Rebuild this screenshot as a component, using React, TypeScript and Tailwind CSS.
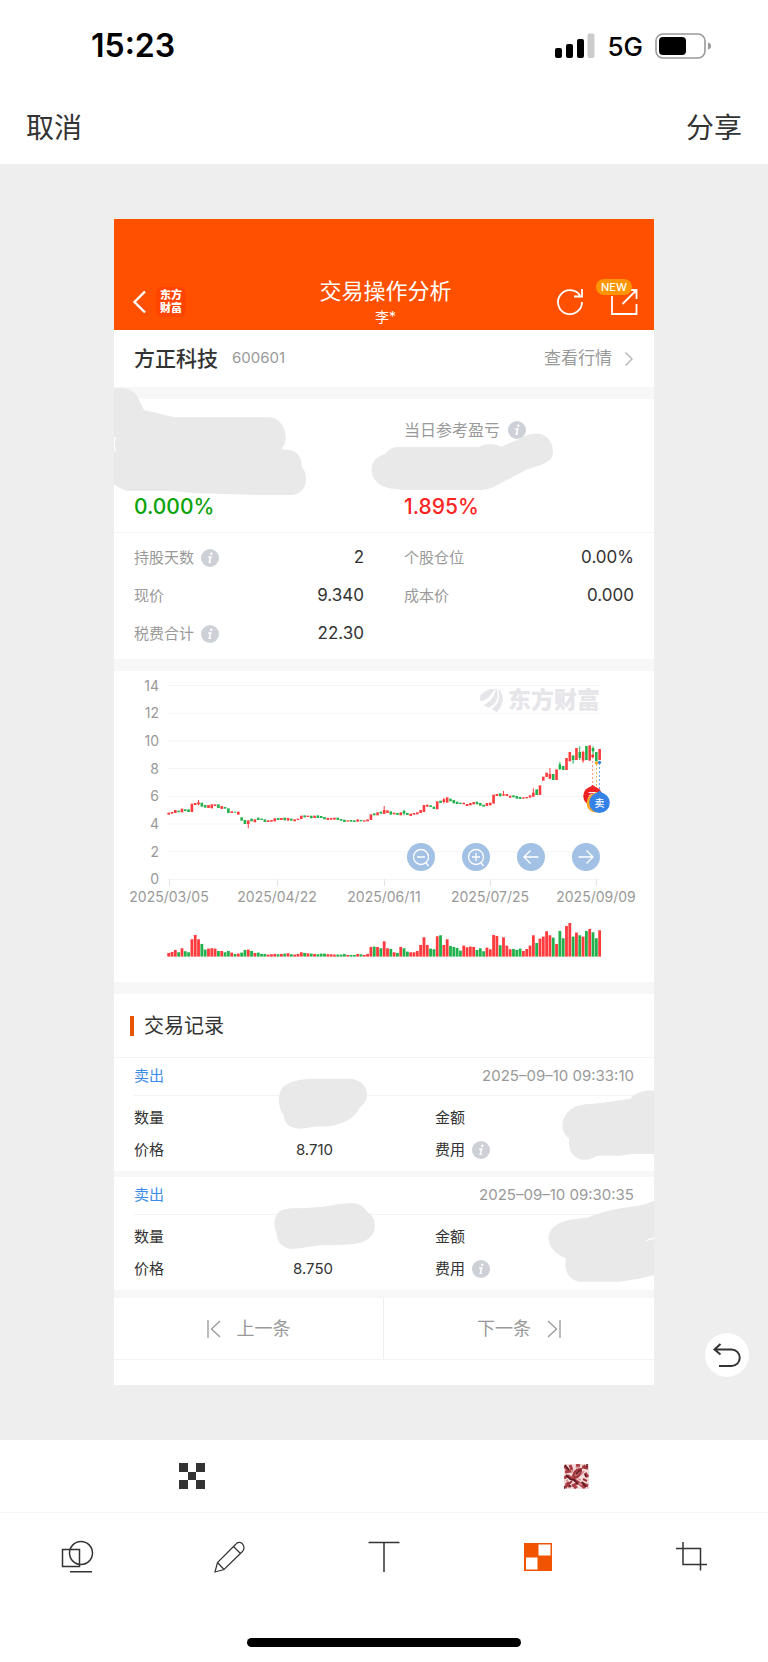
import React from "react";

type Candle = [up: number, top: number, bottom: number, volume: number, wickTop?: number, wickBottom?: number];

const candles: Candle[] = [
  [1, 458, 464, 11], [1, 456, 461, 14], [1, 450, 459, 20], [0, 452, 457, 13], [1, 446, 457, 25], [0, 448, 453, 16],
  [0, 448, 456, 13], [1, 431, 456, 52], [1, 429, 435, 65], [1, 427, 433, 52, 420, 436], [0, 428, 440, 38], [0, 435, 443, 21],
  [1, 435, 444, 24], [1, 433, 445, 25], [1, 433, 438, 24], [0, 433, 444, 17], [1, 438, 447, 17], [0, 441, 446, 13],
  [0, 445, 459, 17], [1, 454, 459, 12], [0, 455, 458, 8], [1, 455, 464, 9], [0, 472, 482, 12], [0, 480, 492, 20],
  [1, 482, 492, 21, 480, 505], [0, 476, 484, 17], [1, 478, 487, 11], [0, 473, 480, 12], [0, 476, 480, 8], [0, 478, 486, 8],
  [1, 481, 486, 6], [1, 480, 485, 7], [1, 475, 484, 8], [0, 474, 480, 7], [1, 474, 480, 8], [0, 473, 481, 9],
  [1, 474, 482, 10], [0, 476, 482, 7], [1, 478, 484, 6], [1, 476, 480, 8], [1, 467, 477, 13], [0, 466, 472, 11],
  [1, 467, 471, 10], [0, 467, 475, 9], [1, 467, 474, 8], [0, 466, 474, 7], [0, 468, 474, 9], [0, 471, 478, 9],
  [1, 474, 480, 7], [1, 474, 479, 7], [1, 473, 479, 6], [0, 473, 480, 6], [0, 477, 482, 6], [0, 479, 486, 8],
  [1, 481, 485, 5], [0, 480, 485, 5], [0, 481, 486, 5], [1, 478, 485, 8], [0, 480, 484, 7], [1, 481, 485, 5],
  [1, 478, 484, 8], [1, 463, 480, 29], [0, 460, 466, 30], [1, 457, 466, 29], [0, 455, 461, 25], [1, 450, 462, 46, 438, 462],
  [1, 451, 459, 25], [0, 454, 464, 23], [1, 458, 463, 13], [0, 459, 465, 11], [1, 457, 466, 29], [0, 453, 461, 25, 449, 466],
  [0, 459, 465, 15], [1, 461, 468, 13], [1, 459, 464, 13], [1, 457, 463, 17], [1, 450, 459, 35], [1, 435, 456, 58],
  [1, 434, 440, 35], [0, 436, 441, 24], [0, 440, 447, 22], [1, 424, 448, 61], [0, 422, 429, 64], [1, 418, 426, 35, 414, 430],
  [1, 412, 428, 52], [0, 416, 424, 32], [0, 420, 430, 29], [0, 425, 432, 26], [0, 428, 432, 18], [1, 428, 433, 33],
  [1, 432, 438, 28], [1, 429, 436, 30], [1, 426, 433, 29], [0, 425, 433, 20], [0, 429, 437, 25], [0, 434, 440, 16],
  [1, 429, 438, 27], [1, 428, 436, 22], [1, 404, 431, 65], [1, 402, 408, 62], [0, 400, 409, 34], [1, 403, 407, 58, 393, 407],
  [1, 402, 408, 33], [1, 407, 413, 22], [0, 406, 412, 23], [0, 408, 416, 20], [0, 411, 417, 24], [1, 412, 416, 17],
  [1, 411, 415, 23], [1, 406, 413, 33], [1, 398, 410, 64, 385, 410], [0, 388, 405, 41], [1, 376, 405, 54], [1, 350, 362, 60],
  [1, 338, 351, 76], [1, 342, 356, 64, 324, 358], [0, 342, 360, 57], [1, 328, 360, 38], [0, 313, 327, 77, 306, 330], [0, 318, 330, 55],
  [1, 294, 330, 92], [1, 276, 304, 101], [0, 287, 300, 60, 285, 311], [1, 264, 300, 72], [0, 276, 294, 64, 259, 300], [1, 276, 302, 60, 272, 308],
  [0, 258, 300, 77], [1, 256, 302, 83], [0, 264, 274, 73, 259, 288], [0, 276, 304, 55], [1, 267, 300, 79],
];

const RED = "#ff3b3e";
const GREEN = "#22b14c";
const step = 3.315;
const plotLeft = 54.7;

function Info() {
  return (
    <svg viewBox="0 0 18 18" className="size-[18px] shrink-0" aria-hidden="true">
      <circle cx="9" cy="9" r="9" fill="#cdd0d7" />
      <circle cx="10.3" cy="4.8" r="1.2" fill="#fff" />
      <path d="M7.2 8h2.5l-1.4 5.3h1.6" fill="none" stroke="#fff" strokeWidth="1.5" />
    </svg>
  );
}

function Smudge({ y, children }: { y: number; children: React.ReactNode }) {
  return (
    <svg width="540" height="113" className="pointer-events-none absolute top-0 left-0 overflow-visible" fill="#e9e9e9" aria-hidden="true">
      <g transform={`translate(-4 ${y}) scale(.3508 .3333)`}>{children}</g>
    </svg>
  );
}

function Pin({ x, y, r, fill, label }: { x: number; y: number; r: number; fill: string; label?: string }) {
  return (
    <g>
      <path d={`M${x - r * 0.6} ${y - r * 0.7} L${x} ${y - r - 1.6} L${x + r * 0.6} ${y - r * 0.7}Z`} fill={fill} />
      <circle cx={x} cy={y} r={r} fill={fill} />
      {label ? <text x={x} y={y + 4} textAnchor="middle" fontSize="10" fontWeight="500" fill="#fff">{label}</text> : null}
    </g>
  );
}

function PriceChart() {
  const rows = [14, 12, 10, 8, 6, 4, 2, 0];
  const dates = ["2025/03/05", "2025/04/22", "2025/06/11", "2025/07/25", "2025/09/09"];
  const tickX = [55, 163, 270, 376, 482];
  return (
    <svg viewBox="0 0 540 311" className="block w-full" role="img" aria-label="股价走势">
      {rows.map((n, i) => (
        <g key={n}>
          <line x1="54" x2="486" y1={14.5 + i * 27.7} y2={14.5 + i * 27.7} stroke="#f4f4f5" />
          <text x="45" y={19.5 + i * 27.7} textAnchor="end" fontSize="14" fill="#999">{n}</text>
        </g>
      ))}
      {dates.map((d, i) => (
        <g key={d}>
          <line x1={tickX[i] + 0.5} x2={tickX[i] + 0.5} y1="208" y2="215" stroke="#e4e4e6" />
          <text x={tickX[i]} y="231" textAnchor="middle" fontSize="14" fill="#999">{d}</text>
        </g>
      ))}
      <g fill="#e5e5ea">
        <path d="M366.300 24.500C371 19.500 376 17.800 381 17.500C378 23 375 28 366.800 30.500C366 29 366 27 366.300 24.500Z" />
        <path d="M370 34C377 30 381 25 382 16.500C385.500 25 384 32 375 36.500C373 36.500 371 35.500 370 34Z" />
        <path d="M378 37.500C385 33 386.500 26 384 17.500C390 22 391 33 383 41C381.500 40.500 379 39.500 378 37.500Z" />
        <text x="394" y="37" fontSize="23" fontWeight="900">东方财富</text>
      </g>
      {candles.map(([up, top, bottom, volume, wt, wb], i) => {
        const x = plotLeft + i * step;
        const fill = up ? RED : GREEN;
        return (
          <g key={i} fill={fill}>
            <rect x={x - 1.3} y={top / 3 - 11} width="2.6" height={(bottom - top) / 3} />
            {wt && wb ? <rect x={x - 0.5} y={wt / 3 - 11} width="1" height={(wb - wt) / 3} /> : null}
            <rect x={x - 1.4} y={285.6 - volume / 3} width="2.8" height={volume / 3} />
          </g>
        );
      })}
      <g strokeDasharray="2 2" strokeWidth="1">
        <line x1="478.7" x2="478.7" y1="86" y2="115" stroke="#f8898b" />
        <line x1="482.5" x2="482.5" y1="93" y2="121" stroke="#f8b84f" />
        <line x1="485.5" x2="485.5" y1="92" y2="121" stroke="#78a8ec" />
      </g>
      <circle cx="478.7" cy="85" r="1.5" fill="#f02a2a" />
      <circle cx="482.5" cy="92" r="1.7" fill="#f9a826" />
      <circle cx="485.5" cy="91.5" r="1.7" fill="#3582e6" />
      <Pin x={478.7} y={125} r={9.5} fill="#f02222" label="买" />
      <Pin x={482} y={132} r={9.5} fill="#f9a826" />
      <Pin x={485.5} y={131.7} r={10.3} fill="#3582e6" label="卖" />
    </svg>
  );
}

function ChartButton({ label, children }: { label: string; children: React.ReactNode }) {
  return (
    <button type="button" aria-label={label} className="flex size-7 items-center justify-center rounded-full bg-[#a3c1e5]">
      <svg viewBox="0 0 28 28" className="size-7" fill="none" stroke="#fff" strokeWidth="1.3">{children}</svg>
    </button>
  );
}

function Stat({ label, value, info }: { label: string; value: string; info?: boolean }) {
  return (
    <div className="flex h-[38px] items-center justify-between">
      <dt className="flex items-center gap-[7px] text-[15px] text-[#999]">{label}{info && <Info />}</dt>
      <dd className="text-[17px] text-[#333]">{value}</dd>
    </div>
  );
}

function Trade({ time, price, children }: { time: string; price: string; children: React.ReactNode }) {
  return (
    <article className="relative text-[15px] text-[#333]">
      <div className="mx-5 flex h-[38px] items-center justify-between border-b border-[#f3f3f3]">
        <span className="text-[#3b8bea]">卖出</span>
        <time className="text-[#999]">{time}</time>
      </div>
      <dl className="grid grid-cols-2 gap-x-[102px] px-5 pt-1.5 pb-[5px] leading-8">
        <div className="flex justify-between"><dt>数量</dt><dd /></div>
        <div className="flex"><dt>金额</dt><dd /></div>
        <div className="flex justify-between"><dt>价格</dt><dd>{price}</dd></div>
        <div className="flex"><dt className="flex items-center gap-[7px]">费用<Info /></dt><dd /></div>
      </dl>
      {children}
    </article>
  );
}

function Mosaic() {
  return (
    <svg viewBox="0 0 25 25" className="size-[25px]" fill="none" aria-hidden="true">
      <rect width="25" height="25" fill="#f4dcdd" />
      <path d="M0 2l4 4M1 8l6-1M6 1l2 5M12 1l4 1M18 3l6 1M0 14l4-2 5 3 6 4 6 5M21 9l3 4M17 19l7 3M2 19l4 4M1 24l4-6M8 22l6-3M10 24l3-2" stroke="#a93d43" strokeWidth="3" />
      <path d="M9 12c1-5 4-7 8-7 1 4-2 8-6 9zM20 1l3 4M19 15l4 2M8 17l-3 3" stroke="#a0333a" strokeWidth="2" fill="#c0666a" />
      <path d="M1 1l4 5M12 10l4-4M2 11l4 4 4 1 4 4M18 18l4 5M23 0v3M5 21l2 2M0 22v3M21 10l1 3" stroke="#5d1820" strokeWidth="1.6" />
      <path d="M7 9l2-3M17 11l3-4M12 4l3-1M18 21l-3-2M4 16l-2 1M14 15l3 1" stroke="#d98f93" strokeWidth="1.8" />
    </svg>
  );
}

function Tool({ label, active, children }: { label: string; active?: boolean; children: React.ReactNode }) {
  return (
    <button type="button" aria-label={label} aria-pressed={!!active} className="flex items-center justify-center">
      <svg viewBox="0 0 34 34" className="size-[34px]" fill="none" stroke="#333" strokeWidth="1.5">{children}</svg>
    </button>
  );
}

export default function App() {
  return (
    <div className="flex min-h-screen flex-col bg-white font-['Inter','Noto_Sans_CJK_SC',sans-serif] text-[#333]">
      <div className="flex h-[92px] items-center justify-between pr-14 pl-[91px] text-black">
        <span className="text-[32px] font-semibold">15:23</span>
        <div className="flex items-center gap-3">
          <svg viewBox="0 0 40 26" className="h-[26px] w-10" aria-hidden="true">
            <rect x="0" y="15" width="7" height="10" rx="2" />
            <rect x="11" y="11" width="7" height="14" rx="2" />
            <rect x="22" y="6" width="7" height="19" rx="2" />
            <rect x="32.500" y="0.500" width="7" height="24.500" rx="2" fill="#ccc" />
          </svg>
          <span className="text-[26px] font-medium">5G</span>
          <svg viewBox="0 0 57 26" className="h-[26px] w-[57px]" aria-hidden="true">
            <rect x="1" y="1" width="49" height="24" rx="7" fill="none" stroke="#999" strokeWidth="1.6" />
            <rect x="4" y="4" width="27" height="18" rx="4" />
            <path d="M53 9.500q3 1 3 3.500t-3 3.500z" fill="#999" />
          </svg>
        </div>
      </div>
      <nav className="flex h-[72px] items-center justify-between px-[26px] text-[28px]">
        <button type="button">取消</button>
        <button type="button">分享</button>
      </nav>

      <main className="relative bg-[#eee] px-[114px] pt-[55px] pb-[55px]">
        <div className="relative overflow-hidden bg-[#f7f7f7]">
          <header className="grid h-[111px] grid-cols-[1fr_auto_1fr] items-end bg-[#ff5000] pr-[15px] pl-[18px] text-white">
            <div className="flex items-center gap-2.5 pb-[13px]">
              <button type="button" aria-label="返回">
                <svg viewBox="0 0 14 24" className="h-6 w-3.5" fill="none" stroke="#fff" strokeWidth="2.4"><path d="M13 1.500 2.500 12 13 22.500" /></svg>
              </button>
              <span className="flex size-[30px] items-center justify-center rounded-md bg-[#ff4400] text-center text-[11px] leading-[13px] font-black">东方<br />财富</span>
            </div>
            <div className="flex flex-col items-center pb-[3px]">
              <h1 className="text-[22px] leading-8">交易操作分析</h1>
              <p className="text-sm leading-5">李*</p>
            </div>
            <div className="flex items-center justify-end gap-6 pb-[13px]">
              <button type="button" aria-label="刷新">
                <svg viewBox="0 0 30 30" className="size-[30px]" fill="none" stroke="#fff" strokeWidth="1.8"><path d="M25 8.500A12 12 0 1 0 27 15M27 2v7.500h-8" /></svg>
              </button>
              <button type="button" aria-label="分享分析" className="relative">
                <svg viewBox="0 0 30 30" className="size-[30px]" fill="none" stroke="#fff" strokeWidth="1.800"><path d="M3 9v18h24.500V17M18 3h9.500v9M27.500 3 13.500 17" /></svg>
                <span className="absolute -top-2 right-[7px] rounded-full bg-[#ff9500] px-[5px] text-[11px] leading-4 font-medium">NEW</span>
              </button>
            </div>
          </header>

          <section className="flex h-[57px] items-center justify-between bg-white pr-5 pl-5">
            <h2 className="flex items-center gap-3.5 text-[21px] font-medium">方正科技 <span className="text-[15px] font-normal text-[#999]">600601</span></h2>
            <a href="#quote" className="flex items-center gap-3 text-[17px] text-[#999]">
              查看行情
              <svg viewBox="0 0 10 16" className="h-4 w-2.5" fill="none" stroke="#bbb" strokeWidth="1.5"><path d="m1.500 1.500 6.500 6.500-6.500 6.500" /></svg>
            </a>
          </section>

          <section className="relative mt-3 bg-white">
            <div className="grid grid-cols-2 gap-x-10 border-b border-[#f3f3f3] px-5 pt-[19px] pb-[11px]">
              <p className="col-start-2 flex h-6 items-center gap-2 text-base text-[#999]">当日参考盈亏<Info /></p>
              <p className="mt-[51px] text-[21px] leading-7 font-medium text-[#0aa30a]">0.000%</p>
              <p className="mt-[51px] text-[21px] leading-7 font-medium text-[#fc2525]">1.895%</p>
            </div>
            <dl className="grid grid-cols-2 gap-x-10 px-5 pt-1.5 pb-1.5">
              <Stat label="持股天数" value="2" info />
              <Stat label="个股仓位" value="0.00%" />
              <Stat label="现价" value="9.340" />
              <Stat label="成本价" value="0.000" />
              <Stat label="税费合计" value="22.30" info />
            </dl>
            <Smudge y={-19}>
              <path d="M10 25C50 18 75 35 85 65L97 90 183 112H455C480 112 500 140 501 170C501 190 495 198 488 208L510 210C535 212 547 235 547 262C556 272 559 282 559 300C557 328 540 344 515 345H420L240 339 170 332H50C35 330 22 320 10 312Z" />
              <path d="M10 172l7-2-4 22 4 23-7-3z" fill="#fff" />
              <path d="M785 222C795 205 810 201 825 201H1052C1070 190 1095 188 1115 200L1165 178C1195 160 1215 155 1240 168C1262 182 1268 215 1258 235C1245 255 1200 262 1180 273L1110 312C1090 325 1075 328 1060 330H830C800 325 780 325 765 310C742 290 740 260 755 240C762 232 772 226 785 222Z" />
            </Smudge>
          </section>

          <section className="relative mt-3 bg-white">
            <PriceChart />
            <div className="absolute right-[54px] bottom-[111px] flex gap-[27px]">
              <ChartButton label="缩小"><circle cx="14" cy="14" r="7.500" /><path d="M10 14h8M18.500 19l3 4" /></ChartButton>
              <ChartButton label="放大"><circle cx="14" cy="14" r="7.500" /><path d="M10 14h8M14 10v8M18.500 19l3 4" /></ChartButton>
              <ChartButton label="向左"><path d="M21.500 14H7M13.500 7.500 7 14l6.500 6.500" /></ChartButton>
              <ChartButton label="向右"><path d="M6.500 14H21M14.500 7.500 21 14l-6.500 6.500" /></ChartButton>
            </div>
          </section>

          <section className="mt-3">
            <div className="flex h-16 items-center gap-2.5 border-b border-[#f3f3f3] bg-white pl-4">
              <span className="h-5 w-1 bg-[#ea5504]" />
              <h2 className="text-xl">交易记录</h2>
            </div>
            <div className="flex flex-col gap-1.5 [&>article]:bg-white">
              <Trade time="2025–09–10 09:33:10" price="8.710">
                <Smudge y={-78}>
                  <path d="M495 405C478 385 478 345 490 325C505 305 540 298 575 296H685C715 298 733 320 733 345C733 370 715 375 708 390C690 420 665 428 645 434C625 442 600 438 580 440C560 443 545 448 530 445C500 438 496 420 495 405Z" />
                  <path d="M1560 335C1520 325 1500 340 1483 356L1400 369 1355 373C1310 378 1288 410 1290 440C1292 460 1300 468 1309 476C1305 500 1312 530 1345 539C1370 542 1378 530 1390 527H1450L1490 522H1560Z" />
                </Smudge>
              </Trade>
              <Trade time="2025–09–10 09:30:35" price="8.750">
                <Smudge y={-7}>
                  <path d="M475 190C465 165 468 135 485 123C500 113 530 115 560 114L610 110C640 105 680 95 705 101C722 106 728 120 738 130C760 145 760 185 742 202C725 218 705 222 670 224L600 226C570 230 540 236 515 237C490 233 475 215 475 190Z" />
                  <path d="M1560 88C1530 103 1510 108 1480 111C1430 118 1390 130 1365 142L1330 147C1280 150 1248 175 1250 210C1253 235 1275 255 1300 265C1294 290 1300 325 1335 335H1450C1490 330 1520 325 1560 312Z" />
                  <path d="M1529 214q8-10 22-8" fill="none" stroke="#fff" strokeWidth="4" />
                </Smudge>
              </Trade>
            </div>
          </section>

          <div className="mt-2 grid grid-cols-2 border-b border-[#f3f3f3] bg-white text-lg text-[#999]">
            <button type="button" className="flex h-[61px] items-center justify-center gap-4 border-r border-[#eee]">
              <svg viewBox="0 0 14 20" className="h-5 w-3.5" fill="none" stroke="#999" strokeWidth="1.3"><path d="M1 1v18M13 2 4.500 10l8.500 8" /></svg>
              上一条
            </button>
            <button type="button" className="flex h-[61px] items-center justify-center gap-4">
              下一条
              <svg viewBox="0 0 14 20" className="h-5 w-3.5" fill="none" stroke="#999" strokeWidth="1.3"><path d="M13 1v18M1 2l8.500 8L1 18" /></svg>
            </button>
          </div>
          <div className="h-[25px] bg-white" />
        </div>
        <button type="button" aria-label="撤销" className="absolute right-[19px] bottom-[63px] size-11 rounded-full bg-white">
          <svg viewBox="0 0 44 44" className="size-11" fill="none" stroke="#333" strokeWidth="2"><path d="M15.500 11 9.500 16.500l6 5M9.500 16.500H26.500a8 8 0 0 1 0 16.500H14" /></svg>
        </button>
      </main>

      <div className="grid h-[73px] grid-cols-2 border-b border-[#f5f5f5]">
        <button type="button" aria-label="方格马赛克" className="flex items-center justify-center">
          <svg viewBox="0 0 26 26" className="size-[26px]" fill="#333"><path d="M0 0h9v9H0zM17 0h9v9h-9zM9 9h8v8H9zM0 17h9v9H0zM17 17h9v9h-9z" /></svg>
        </button>
        <button type="button" aria-label="纹理马赛克" className="flex items-center justify-center"><Mosaic /></button>
      </div>
      <div className="grid h-[86px] grid-cols-5">
        <Tool label="形状"><path d="M2.500 10.500h17v17h-17zM10 32.700h22" /><circle cx="21" cy="14" r="11.500" /></Tool>
        <Tool label="画笔"><path d="M2 33 4.500 23.500 22.500 5.500C25 2 29 3 30.500 6.500C31.500 9 31 11 29 13L11 30.500 2 33ZM4.500 23.500 11 30.500M20.500 7.500 27.500 14.500" strokeWidth="1.200" /></Tool>
        <Tool label="文字"><path d="M1.500 3.500h31M17 3.500v29.500" /></Tool>
        <Tool label="马赛克" active><path d="M3 4h28v28H3z" fill="#f05400" stroke="none" /><path d="M17.500 5.500h12v11h-12zM5 18.500h11.500v12H5z" fill="#fff" stroke="none" /></Tool>
        <Tool label="裁剪"><path d="M2 9.500h24.500v22M9 3v22.500h24" /></Tool>
      </div>
      <div className="flex flex-1 items-end justify-center pb-[15px]">
        <div className="h-[9px] w-[274px] rounded-full bg-black" />
      </div>
    </div>
  );
}
